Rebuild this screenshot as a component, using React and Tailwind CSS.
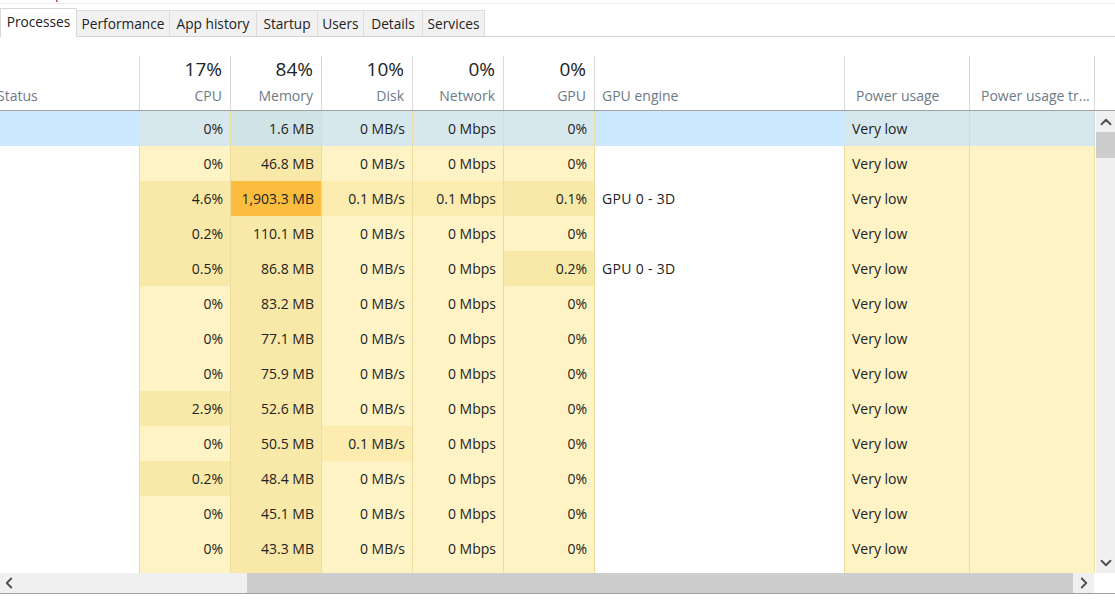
import { ChevronUp, ChevronDown, ChevronLeft, ChevronRight } from "lucide-react";

const tabs = ["Performance", "App history", "Startup", "Users", "Details", "Services"];
const tabWidths = ["w-[93px]", "w-[87px]", "w-[61px]", "w-[46px]", "w-[59px]", "w-[62px]"];

const y1 = "bg-[#fef3c5]";
const y2 = "bg-[#f9e9a8]";
const y3 = "bg-[#fcecb0]";
const orange = "bg-[#fcbd3f]";

const rows = [
  { cpu: "0%", mem: "46.8 MB", disk: "0 MB/s", net: "0 Mbps", gpu: "0%", engine: "", cpuBg: y1, memBg: y2, diskBg: y1, netBg: y1, gpuBg: y1 },
  { cpu: "4.6%", mem: "1,903.3 MB", disk: "0.1 MB/s", net: "0.1 Mbps", gpu: "0.1%", engine: "GPU 0 - 3D", cpuBg: y2, memBg: orange, diskBg: y3, netBg: y3, gpuBg: y2 },
  { cpu: "0.2%", mem: "110.1 MB", disk: "0 MB/s", net: "0 Mbps", gpu: "0%", engine: "", cpuBg: y2, memBg: y2, diskBg: y1, netBg: y1, gpuBg: y1 },
  { cpu: "0.5%", mem: "86.8 MB", disk: "0 MB/s", net: "0 Mbps", gpu: "0.2%", engine: "GPU 0 - 3D", cpuBg: y2, memBg: y2, diskBg: y1, netBg: y1, gpuBg: y2 },
  { cpu: "0%", mem: "83.2 MB", disk: "0 MB/s", net: "0 Mbps", gpu: "0%", engine: "", cpuBg: y1, memBg: y2, diskBg: y1, netBg: y1, gpuBg: y1 },
  { cpu: "0%", mem: "77.1 MB", disk: "0 MB/s", net: "0 Mbps", gpu: "0%", engine: "", cpuBg: y1, memBg: y2, diskBg: y1, netBg: y1, gpuBg: y1 },
  { cpu: "0%", mem: "75.9 MB", disk: "0 MB/s", net: "0 Mbps", gpu: "0%", engine: "", cpuBg: y1, memBg: y2, diskBg: y1, netBg: y1, gpuBg: y1 },
  { cpu: "2.9%", mem: "52.6 MB", disk: "0 MB/s", net: "0 Mbps", gpu: "0%", engine: "", cpuBg: y2, memBg: y2, diskBg: y1, netBg: y1, gpuBg: y1 },
  { cpu: "0%", mem: "50.5 MB", disk: "0.1 MB/s", net: "0 Mbps", gpu: "0%", engine: "", cpuBg: y1, memBg: y2, diskBg: y3, netBg: y1, gpuBg: y1 },
  { cpu: "0.2%", mem: "48.4 MB", disk: "0 MB/s", net: "0 Mbps", gpu: "0%", engine: "", cpuBg: y2, memBg: y2, diskBg: y1, netBg: y1, gpuBg: y1 },
  { cpu: "0%", mem: "45.1 MB", disk: "0 MB/s", net: "0 Mbps", gpu: "0%", engine: "", cpuBg: y1, memBg: y2, diskBg: y1, netBg: y1, gpuBg: y1 },
  { cpu: "0%", mem: "43.3 MB", disk: "0 MB/s", net: "0 Mbps", gpu: "0%", engine: "", cpuBg: y1, memBg: y2, diskBg: y1, netBg: y1, gpuBg: y1 },
];

const HeadCell = ({ pct, label, width }) => (
  <div className={`${width} h-full shrink-0 border-r border-[#d9d9d9] flex flex-col items-end pr-[8px]`}>
    <span className="text-[19px] leading-[24px] mt-[1px] text-[#222]">{pct}</span>
    <span className="text-[14px] leading-[18px] mt-[6px] text-[#6d7a86]">{label}</span>
  </div>
);

const Cell = ({ value, bg, width }) => (
  <div className={`${width} ${bg} h-full shrink-0 border-r border-[#ecdca0] flex items-center justify-end pr-[7px]`}>
    {value}
  </div>
);

const App = () => {
  return (
    <div className="w-[1115px] h-[600px] overflow-hidden bg-white font-['Open_Sans','Noto_Sans',sans-serif] text-[14px] text-[#222] flex flex-col">
      {/* menu bar, only the descenders still show */}
      <div className="h-[4px] shrink-0 border-b border-[#ececec] overflow-hidden text-[12px] leading-[16px] flex">
        <span className="-mt-[13px] ml-[7px] w-[39px]">File</span>
        <span className="-mt-[13px]">Options</span>
      </div>

      {/* tabs */}
      <div className="h-[33px] shrink-0 flex items-end border-b border-[#d5d5d5] text-[13.7px]">
        <div className="w-[77px] h-[29px] bg-white border border-b-0 border-[#d9d9d9] text-center leading-[26px] -mb-[1px] z-10">
          Processes
        </div>
        {tabs.map((t, i) => (
          <div key={t} className={`${tabWidths[i]} h-[26px] bg-[#f1f1f1] border-r border-t border-[#dcdcdc] text-center leading-[26px] whitespace-nowrap`}>
            {t}
          </div>
        ))}
      </div>

      {/* column header */}
      <div className="h-[74px] shrink-0 flex flex-col justify-end border-b border-[#a0a0a0]">
        <div className="h-[54px] flex">
          <div className="w-[140px] h-full shrink-0 border-r border-[#d9d9d9] flex items-end">
            <span className="text-[14px] leading-[18px] mb-[5px] -ml-[3px] text-[#6d7a86]">Status</span>
          </div>
          <HeadCell pct="17%" label="CPU" width="w-[91px]" />
          <HeadCell pct="84%" label="Memory" width="w-[91px]" />
          <HeadCell pct="10%" label="Disk" width="w-[91px]" />
          <HeadCell pct="0%" label="Network" width="w-[91px]" />
          <HeadCell pct="0%" label="GPU" width="w-[91px]" />
          <div className="w-[250px] h-full shrink-0 border-r border-[#d9d9d9] flex items-end pl-[7px]">
            <span className="leading-[18px] mb-[5px] text-[#6d7a86]">GPU engine</span>
          </div>
          <div className="w-[125px] h-full shrink-0 border-r border-[#d9d9d9] flex items-end pl-[11px]">
            <span className="leading-[18px] mb-[5px] text-[#6d7a86]">Power usage</span>
          </div>
          <div className="w-[125px] h-full shrink-0 border-r border-[#d9d9d9] flex items-end pl-[11px]">
            <span className="leading-[18px] mb-[5px] text-[#6d7a86] whitespace-nowrap">Power usage tr...</span>
          </div>
        </div>
      </div>

      {/* rows + vertical scrollbar */}
      <div className="h-[462px] shrink-0 flex">
        <div className="w-[1095px] shrink-0 overflow-hidden">
          <div className="h-[35px] flex bg-[#cce8ff]">
            <div className="w-[140px] h-full shrink-0"></div>
            <Cell value="0%" bg="bg-[#d6e8ee]" width="w-[91px]" />
            <Cell value="1.6 MB" bg="bg-[#d0e4e8]" width="w-[91px]" />
            <Cell value="0 MB/s" bg="bg-[#d6e8ee]" width="w-[91px]" />
            <Cell value="0 Mbps" bg="bg-[#d6e8ee]" width="w-[91px]" />
            <Cell value="0%" bg="bg-[#d6e8ee]" width="w-[91px]" />
            <div className="w-[250px] h-full shrink-0"></div>
            <div className="w-[125px] h-full shrink-0 bg-[#d6e8ee] border-r border-[#c8dce2] flex items-center pl-[7px]">Very low</div>
            <div className="w-[125px] h-full shrink-0 bg-[#d6e8ee] border-r border-[#c8dce2]"></div>
          </div>
          {rows.map((r) => (
            <div key={r.mem} className="h-[35px] flex">
              <div className="w-[140px] h-full shrink-0 border-r border-[#ecdca0]"></div>
              <Cell value={r.cpu} bg={r.cpuBg} width="w-[91px]" />
              <Cell value={r.mem} bg={r.memBg} width="w-[91px]" />
              <Cell value={r.disk} bg={r.diskBg} width="w-[91px]" />
              <Cell value={r.net} bg={r.netBg} width="w-[91px]" />
              <Cell value={r.gpu} bg={r.gpuBg} width="w-[91px]" />
              <div className="w-[250px] h-full shrink-0 border-r border-[#ecdca0] flex items-center pl-[7px] tracking-[0.3px]">{r.engine}</div>
              <div className={`w-[125px] h-full shrink-0 ${y1} border-r border-[#ecdca0] flex items-center pl-[7px]`}>Very low</div>
              <div className={`w-[125px] h-full shrink-0 ${y1} border-r border-[#ecdca0]`}></div>
            </div>
          ))}
          {/* next row, cut off by the scrollbar */}
          <div className="h-[7px] flex">
            <div className="w-[140px] h-full shrink-0 border-r border-[#ecdca0]"></div>
            <Cell value="" bg={y1} width="w-[91px]" />
            <Cell value="" bg={y2} width="w-[91px]" />
            <Cell value="" bg={y1} width="w-[91px]" />
            <Cell value="" bg={y1} width="w-[91px]" />
            <Cell value="" bg={y1} width="w-[91px]" />
            <div className="w-[250px] h-full shrink-0 border-r border-[#ecdca0]"></div>
            <div className={`w-[125px] h-full shrink-0 ${y1} border-r border-[#ecdca0]`}></div>
            <div className={`w-[125px] h-full shrink-0 ${y1} border-r border-[#ecdca0]`}></div>
          </div>
        </div>
        <div className="w-[19px] ml-[1px] shrink-0 bg-[#f0f0f0] flex flex-col">
          <div className="h-[21px] flex items-center justify-center">
            <ChevronUp size={18} strokeWidth={2.5} color="#505050" />
          </div>
          <div className="h-[26px] bg-[#cdcdcd]"></div>
          <div className="flex-1"></div>
          <div className="h-[21px] flex items-center justify-center">
            <ChevronDown size={18} strokeWidth={2.5} color="#505050" />
          </div>
        </div>
      </div>

      {/* horizontal scrollbar */}
      <div className="h-[20px] shrink-0 flex">
        <div className="w-[18px] bg-[#f0f0f0] flex items-center justify-center">
          <ChevronLeft size={18} strokeWidth={2.5} color="#505050" />
        </div>
        <div className="w-[229px] bg-[#f0f0f0]"></div>
        <div className="w-[826px] bg-[#cdcdcd]"></div>
        <div className="w-[21px] bg-[#f0f0f0] flex items-center justify-center">
          <ChevronRight size={18} strokeWidth={2.5} color="#505050" />
        </div>
      </div>
      <div className="h-[1px] shrink-0 bg-[#a0a0a0]"></div>
    </div>
  );
};

export default App;
